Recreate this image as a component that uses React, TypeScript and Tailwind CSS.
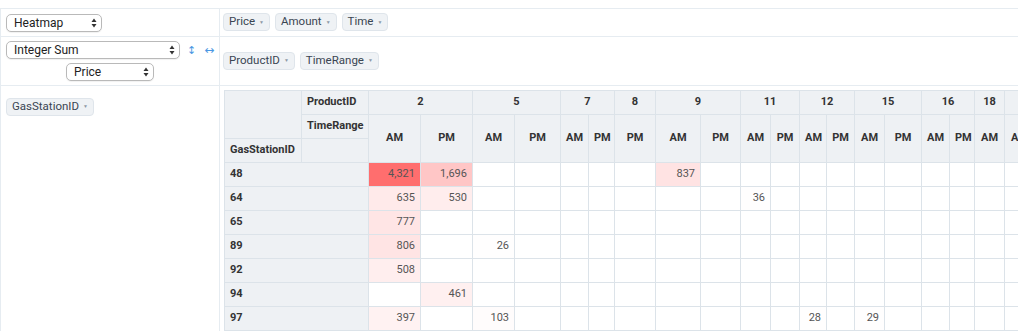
import React from 'react';

type Group = { label: string; cols: string[] };

const groups: Group[] = [
  { label: '2', cols: ['AM', 'PM'] },
  { label: '5', cols: ['AM', 'PM'] },
  { label: '7', cols: ['AM', 'PM'] },
  { label: '8', cols: ['PM'] },
  { label: '9', cols: ['AM', 'PM'] },
  { label: '11', cols: ['AM', 'PM'] },
  { label: '12', cols: ['AM', 'PM'] },
  { label: '15', cols: ['AM', 'PM'] },
  { label: '16', cols: ['AM', 'PM'] },
  { label: '18', cols: ['AM'] },
  { label: '19', cols: ['AM', 'PM'] },
];

const colWidths = [52, 52, 42, 46, 28, 26, 41, 45, 40, 30, 29, 27, 28, 30, 37, 28, 25, 30, 30, 30];

// row label -> { column index: value }
const rows: { id: string; values: Record<number, number> }[] = [
  { id: '48', values: { 0: 4321, 1: 1696, 7: 837 } },
  { id: '64', values: { 0: 635, 1: 530, 9: 36 } },
  { id: '65', values: { 0: 777 } },
  { id: '89', values: { 0: 806, 2: 26 } },
  { id: '92', values: { 0: 508 } },
  { id: '94', values: { 1: 461 } },
  { id: '97', values: { 0: 397, 2: 103, 11: 28, 13: 29 } },
];

const MAX = 4321;

function heat(v: number) {
  const c = 255 - Math.round((145 * v) / MAX);
  return `rgb(255,${c},${c})`;
}

function UpDown() {
  return (
    <svg width="6" height="10" viewBox="0 0 6 10" className="shrink-0">
      <polygon points="0.5,4 3,0.5 5.5,4" fill="#333" />
      <polygon points="0.5,6 5.5,6 3,9.5" fill="#333" />
    </svg>
  );
}

function FakeSelect({ label, className }: { label: string; className: string }) {
  return (
    <div
      className={
        'flex h-[18px] items-center justify-between rounded-[5px] border border-[#b9b9b9] bg-white pl-[7px] pr-[4px] text-[12px] leading-none text-[#222] shadow-[0_1px_1px_rgba(0,0,0,0.06)] ' +
        className
      }
    >
      <span>{label}</span>
      <UpDown />
    </div>
  );
}

function Pill({ label }: { label: string }) {
  return (
    <span className="inline-flex h-[18px] items-center rounded-[4px] border border-[#dfe5eb] bg-[#eff2f5] px-[5px] text-[11.5px] leading-none text-[#3a4552]">
      {label}
      <span className="ml-[4px] text-[5px] text-[#8d99a6]">▼</span>
    </span>
  );
}

const th = 'border border-[#dce3e9] bg-[#eef1f4] px-[5px] text-[11px] font-bold text-[#333]';
const td = 'border border-[#dce3e9] px-[5px] text-right text-[11px] text-[#555]';

function PivotTable() {
  const totalCols = colWidths.length;
  return (
    <table
      className="table-fixed border-collapse"
      style={{ width: 77 + 67 + colWidths.reduce((a, b) => a + b, 0) }}
    >
      <colgroup>
        <col style={{ width: 77 }} />
        <col style={{ width: 67 }} />
        {colWidths.map((w, i) => (
          <col key={i} style={{ width: w }} />
        ))}
      </colgroup>
      <thead>
        <tr className="h-6">
          <th className={th} rowSpan={2}></th>
          <th className={th + ' text-left'}>ProductID</th>
          {groups.map((g) => (
            <th key={g.label} className={th + ' text-center'} colSpan={g.cols.length}>
              {g.label}
            </th>
          ))}
        </tr>
        <tr className="h-6">
          <th className={th + ' text-left'}>TimeRange</th>
          {groups.flatMap((g) =>
            g.cols.map((c) => (
              <th key={g.label + c} className={th + ' text-center'} rowSpan={2}>
                {c}
              </th>
            ))
          )}
        </tr>
        <tr className="h-6">
          <th className={th + ' text-left'}>GasStationID</th>
          <th className={th}></th>
        </tr>
      </thead>
      <tbody>
        {rows.map((r) => (
          <tr key={r.id} className="h-6">
            <th className={th + ' text-left'} colSpan={2}>
              {r.id}
            </th>
            {Array.from({ length: totalCols }).map((_, i) => {
              const v = r.values[i];
              return (
                <td key={i} className={td} style={v ? { backgroundColor: heat(v) } : undefined}>
                  {v ? v.toLocaleString('en-US') : ''}
                </td>
              );
            })}
          </tr>
        ))}
      </tbody>
    </table>
  );
}

export default function App() {
  return (
    <div className="h-[333px] overflow-hidden bg-white pt-2 [font-family:Roboto,sans-serif]">
      <div className="w-[1018px] overflow-hidden border-t border-l border-[#e6ecf1]">
        <div className="flex h-[28px] border-b border-[#e6ecf1]">
          <div className="w-[219px] shrink-0 border-r border-[#e6ecf1] pl-[5px] pt-[5px]">
            <FakeSelect label="Heatmap" className="w-[96px]" />
          </div>
          <div className="flex items-start gap-[5px] pl-[3px] pt-[4px]">
            <Pill label="Price" />
            <Pill label="Amount" />
            <Pill label="Time" />
          </div>
        </div>
        <div className="flex h-[49px] border-b border-[#e6ecf1]">
          <div className="w-[219px] shrink-0 border-r border-[#e6ecf1] pt-[4px]">
            <div className="flex items-center pl-[5px] [font-family:'DejaVu_Sans',sans-serif]">
              <FakeSelect label="Integer Sum" className="w-[174px] [font-family:Roboto,sans-serif]" />
              <span className="ml-[7px] text-[11px] leading-none text-[#4a97e3]">↕</span>
              <span className="ml-[8px] text-[12px] leading-none text-[#4a97e3]">↔</span>
            </div>
            <div className="mt-[4px] flex justify-center">
              <FakeSelect label="Price" className="w-[88px] pl-[7px]" />
            </div>
          </div>
          <div className="flex items-center gap-[5px] pl-[3px] pb-px">
            <Pill label="ProductID" />
            <Pill label="TimeRange" />
          </div>
        </div>
        <div className="flex">
          <div className="w-[219px] shrink-0 border-r border-[#e6ecf1] pl-[5px] pt-[7px]">
            <Pill label="GasStationID" />
          </div>
          <div className="pl-[4px] pt-[4px]">
            <PivotTable />
          </div>
        </div>
      </div>
    </div>
  );
}
